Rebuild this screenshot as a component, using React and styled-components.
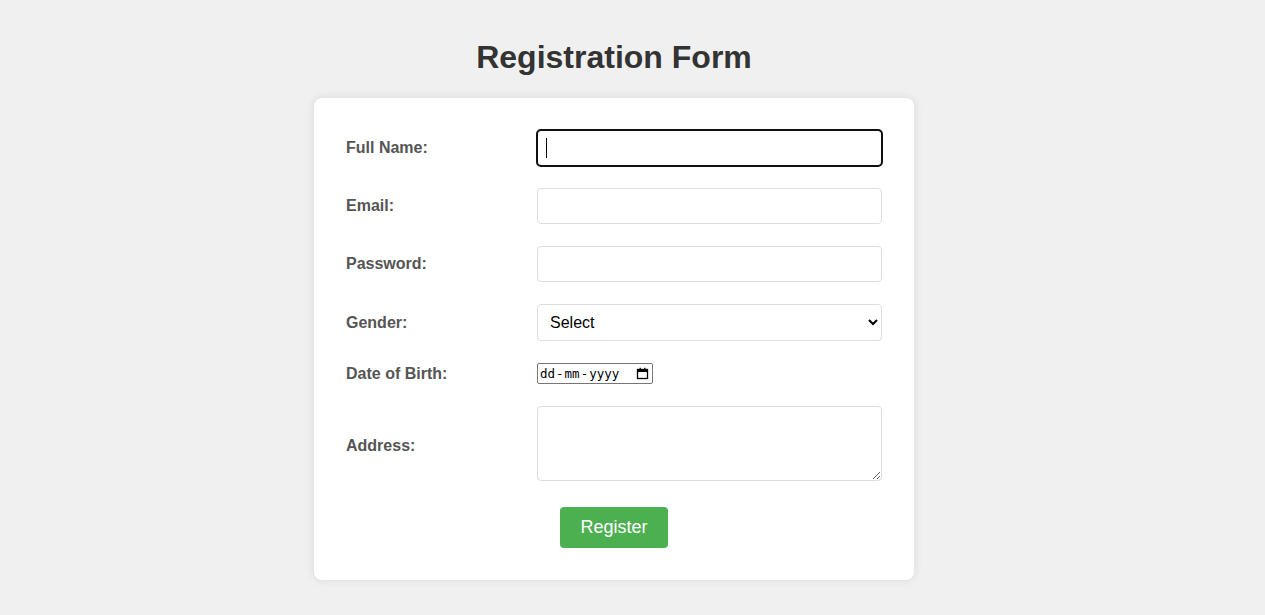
import React from "react";
import styled, { createGlobalStyle } from "styled-components";

const GlobalStyle = createGlobalStyle`
  html, body {
    margin: 0;
    padding: 0;
    background: #f0f0f0;
    font-family: "Liberation Sans", Arial, sans-serif;
  }
`;

const Page = styled.div`
  display: flex;
  flex-direction: column;
  align-items: center;
  padding: 39px 37px 30px 0;
`;

const Title = styled.h1`
  margin: 0 0 22px;
  font-size: 32px;
  line-height: 37px;
  font-weight: bold;
  color: #333;
`;

const Card = styled.form`
  width: 600px;
  box-sizing: border-box;
  padding: 22px;
  background: #fff;
  border-radius: 8px;
  box-shadow: 0 0 10px rgba(0, 0, 0, 0.1);
  display: grid;
  grid-template-columns: 189px 365px;
  column-gap: 2px;
  row-gap: 2px;
`;

const Label = styled.label`
  display: flex;
  align-items: center;
  padding: 10px;
  font-size: 16px;
  font-weight: bold;
  color: #555;
`;

const Cell = styled.div`
  position: relative;
  padding: ${(p) => (p.$tall ? "10px 10px 14px" : "10px")};
  display: flex;
  align-items: ${(p) => (p.$tall ? "flex-start" : "center")};
`;

const Input = styled.input`
  width: 100%;
  height: 36px;
  box-sizing: border-box;
  padding: 8px;
  font-size: 16px;
  font-family: "Liberation Sans", Arial, sans-serif;
  border: 1px solid #ddd;
  border-radius: 4px;
  background: #fff;
  outline: ${(p) => (p.$focused ? "2px solid #101010" : "none")};
  outline-offset: -1px;
  caret-color: transparent;
`;

const Caret = styled.span`
  position: absolute;
  left: 19px;
  top: 18px;
  width: 1px;
  height: 20px;
  background: #000;
  pointer-events: none;
`;

const Select = styled.select`
  width: 100%;
  height: 37px;
  box-sizing: border-box;
  padding: 8px;
  font-size: 16px;
  font-family: "Liberation Sans", Arial, sans-serif;
  color: #000;
  border: 1px solid #ddd;
  border-radius: 4px;
  background: #fff;
  outline: none;
`;

const DateBox = styled.div`
  width: 116px;
  height: 21px;
  box-sizing: border-box;
  border: 1px solid #767676;
  border-radius: 2px;
  display: flex;
  align-items: center;
  justify-content: space-between;
  padding: 0 3px 0 2px;
  font-family: "DejaVu Sans Mono", monospace;
  font-size: 12.5px;
  color: #000;
  background: #fff;
`;

const Dash = styled.span`
  margin: 0 1px;
`;

const TextArea = styled.textarea`
  width: 100%;
  height: 75px;
  box-sizing: border-box;
  padding: 8px;
  font-size: 16px;
  font-family: "Liberation Sans", Arial, sans-serif;
  border: 1px solid #ddd;
  border-radius: 4px;
  outline: none;
  resize: vertical;
  display: block;
`;

const ButtonRow = styled.div`
  grid-column: 1 / -1;
  display: flex;
  justify-content: center;
  padding: 10px;
`;

const Button = styled.button`
  padding: 10px 20px;
  font-size: 18px;
  font-family: "Liberation Sans", Arial, sans-serif;
  line-height: 21px;
  color: #fff;
  background: #4caf50;
  border: none;
  border-radius: 4px;
  cursor: pointer;
`;

const CalendarIcon = () => (
  <svg width="13" height="13" viewBox="0 0 13 13">
    <rect x="1.5" y="2.5" width="10" height="9" fill="none" stroke="#000" strokeWidth="1.3" />
    <rect x="1.5" y="2.5" width="10" height="2.5" fill="#000" />
    <rect x="3.5" y="0.8" width="1.3" height="2" fill="#000" />
    <rect x="8.2" y="0.8" width="1.3" height="2" fill="#000" />
  </svg>
);

const App = () => {
  return (
    <Page>
      <GlobalStyle />
      <Title>Registration Form</Title>
      <Card onSubmit={(e) => e.preventDefault()}>
        <Label htmlFor="name">Full Name:</Label>
        <Cell>
          <Input id="name" type="text" $focused />
          <Caret />
        </Cell>

        <Label htmlFor="email">Email:</Label>
        <Cell>
          <Input id="email" type="email" />
        </Cell>

        <Label htmlFor="password">Password:</Label>
        <Cell>
          <Input id="password" type="password" />
        </Cell>

        <Label htmlFor="gender">Gender:</Label>
        <Cell>
          <Select id="gender" defaultValue="">
            <option value="">Select</option>
            <option value="male">Male</option>
            <option value="female">Female</option>
            <option value="other">Other</option>
          </Select>
        </Cell>

        <Label>Date of Birth:</Label>
        <Cell>
          <DateBox>
            <span>
              dd<Dash>-</Dash>mm<Dash>-</Dash>yyyy
            </span>
            <CalendarIcon />
          </DateBox>
        </Cell>

        <Label htmlFor="address">Address:</Label>
        <Cell $tall>
          <TextArea id="address" />
        </Cell>

        <ButtonRow>
          <Button type="submit">Register</Button>
        </ButtonRow>
      </Card>
    </Page>
  );
};

export default App;
